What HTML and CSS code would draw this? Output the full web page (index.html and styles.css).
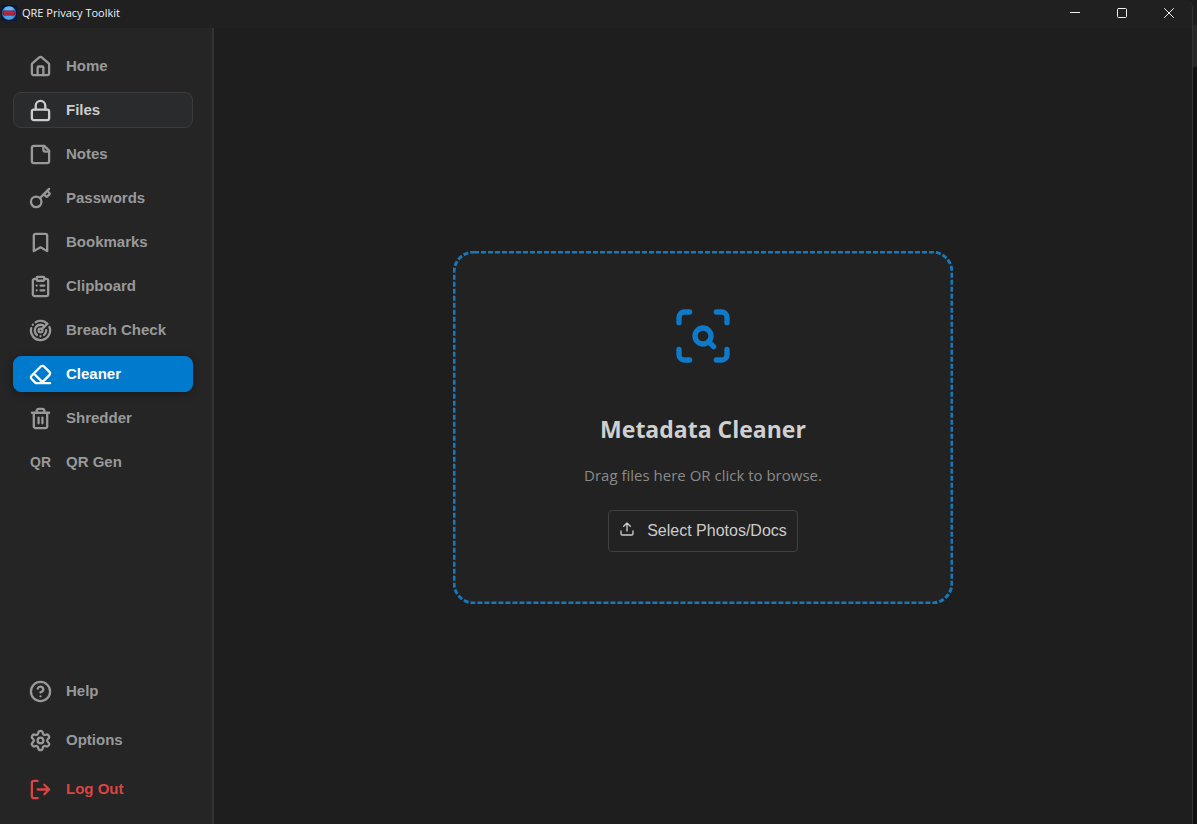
FILE: index.html
```html
<!DOCTYPE html>
<html lang="en">
<head>
<meta charset="utf-8">
<title>QRE Privacy Toolkit</title>
<link rel="stylesheet" href="styles.css">
</head>
<body>
<div class="window">
  <header class="titlebar">
    <svg class="app-icon" viewBox="0 0 16 16" aria-hidden="true">
      <rect width="16" height="16" rx="1" fill="#06183c"/>
      <circle cx="8" cy="8" r="7" fill="#2f86d6"/>
      <ellipse cx="8" cy="4" rx="4.500" ry="2.300" fill="#65b7ee"/>
      <ellipse cx="8" cy="12" rx="4.500" ry="2" fill="#4ba2e4"/>
      <rect x="1.500" y="5.500" width="13" height="5" rx="2" fill="#701c3c"/>
      <path d="M3 7.200h10M3 9h10" stroke="#d63145" stroke-width="1.200" stroke-dasharray="3 .6"/>
    </svg>
    <span class="app-name">QRE Privacy Toolkit</span>
    <div class="window-controls">
      <button type="button" aria-label="Minimize"><svg viewBox="0 0 10 10"><path d="M0 4.500h10"/></svg></button>
      <button type="button" aria-label="Maximize"><svg viewBox="0 0 10 10"><rect x=".5" y=".5" width="9" height="9" rx="1"/></svg></button>
      <button type="button" aria-label="Close"><svg viewBox="0 0 10 10"><path d="m.5.5 9 9m0-9-9 9"/></svg></button>
    </div>
  </header>

  <div class="shell">
    <nav class="sidebar">
      <div class="nav-group">
        <button type="button" class="nav-item"><svg class="icon" viewBox="0 0 24 24"><path d="M15 21v-8a1 1 0 0 0-1-1h-4a1 1 0 0 0-1 1v8"/><path d="M3 10a2 2 0 0 1 .709-1.528l7-5.999a2 2 0 0 1 2.582 0l7 5.999A2 2 0 0 1 21 10v9a2 2 0 0 1-2 2H5a2 2 0 0 1-2-2z"/></svg>Home</button>
        <button type="button" class="nav-item hovered"><svg class="icon" viewBox="0 0 24 24"><rect width="18" height="11" x="3" y="11" rx="2"/><path d="M7 11V7a5 5 0 0 1 10 0v4"/></svg>Files</button>
        <button type="button" class="nav-item"><svg class="icon" viewBox="0 0 24 24"><path d="M16 3H5a2 2 0 0 0-2 2v14a2 2 0 0 0 2 2h14a2 2 0 0 0 2-2V8Z"/><path d="M15 3v4a2 2 0 0 0 2 2h4"/></svg>Notes</button>
        <button type="button" class="nav-item"><svg class="icon" viewBox="0 0 24 24"><path d="m15.500 7.500 2.300 2.300a1 1 0 0 0 1.400 0l2.100-2.100a1 1 0 0 0 0-1.400L19 4"/><path d="m21 2-9.600 9.600"/><circle cx="7.500" cy="15.500" r="5.500"/></svg>Passwords</button>
        <button type="button" class="nav-item"><svg class="icon" viewBox="0 0 24 24"><path d="m19 21-7-4-7 4V5a2 2 0 0 1 2-2h10a2 2 0 0 1 2 2z"/></svg>Bookmarks</button>
        <button type="button" class="nav-item"><svg class="icon" viewBox="0 0 24 24"><rect width="8" height="4" x="8" y="2" rx="1"/><path d="M16 4h2a2 2 0 0 1 2 2v14a2 2 0 0 1-2 2H6a2 2 0 0 1-2-2V6a2 2 0 0 1 2-2h2M12 11h4M12 16h4M8 11h.01M8 16h.01"/></svg>Clipboard</button>
        <button type="button" class="nav-item"><svg class="icon" viewBox="0 0 24 24"><path d="M19.070 4.930A10 10 0 0 0 6.990 3.340M4 6h.01M2.290 9.620A10 10 0 1 0 21.310 8.350"/><path d="M16.240 7.760A6 6 0 1 0 8.230 16.670M12 18h.01M17.990 11.660A6 6 0 0 1 15.770 16.670"/><circle cx="12" cy="12" r="2"/><path d="m13.410 10.590 5.660-5.660"/></svg>Breach Check</button>
        <button type="button" class="nav-item active" aria-current="page"><svg class="icon" viewBox="0 0 24 24"><path d="m7 21-4.300-4.300c-1-1-1-2.500 0-3.400l9.600-9.600c1-1 2.500-1 3.400 0l5.600 5.600c1 1 1 2.500 0 3.400L13 21M22 21H7M5 11l9 9"/></svg>Cleaner</button>
        <button type="button" class="nav-item"><svg class="icon" viewBox="0 0 24 24"><path d="M3 6h18M19 6v14a2 2 0 0 1-2 2H7a2 2 0 0 1-2-2V6M8 6V4a2 2 0 0 1 2-2h4a2 2 0 0 1 2 2v2M10 11v6M14 11v6"/></svg>Shredder</button>
        <button type="button" class="nav-item"><span class="icon-text" aria-hidden="true">QR</span>QR Gen</button>
      </div>
      <div class="nav-group nav-footer">
        <button type="button" class="nav-item"><svg class="icon" viewBox="0 0 24 24"><circle cx="12" cy="12" r="10"/><path d="M9.090 9a3 3 0 0 1 5.830 1c0 2-3 3-3 3M12 17h.01"/></svg>Help</button>
        <button type="button" class="nav-item"><svg class="icon" viewBox="0 0 24 24"><path d="M9.671 4.136a2.340 2.340 0 0 1 4.659 0 2.340 2.340 0 0 0 3.319 1.915 2.340 2.340 0 0 1 2.330 4.033 2.340 2.340 0 0 0 0 3.831 2.340 2.340 0 0 1-2.330 4.033 2.340 2.340 0 0 0-3.319 1.915 2.340 2.340 0 0 1-4.659 0 2.340 2.340 0 0 0-3.320-1.915 2.340 2.340 0 0 1-2.330-4.033 2.340 2.340 0 0 0 0-3.831A2.340 2.340 0 0 1 6.350 6.051a2.340 2.340 0 0 0 3.319-1.915"/><circle cx="12" cy="12" r="3"/></svg>Options</button>
        <button type="button" class="nav-item danger"><svg class="icon" viewBox="0 0 24 24"><path d="m16 17 5-5-5-5M21 12H9M9 21H5a2 2 0 0 1-2-2V5a2 2 0 0 1 2-2h4"/></svg>Log Out</button>
      </div>
    </nav>

    <main class="content">
      <section class="dropzone">
        <svg class="dropzone-outline" aria-hidden="true"><rect x="1" y="1" rx="20"/></svg>
        <svg class="scan-icon" viewBox="0 0 24 24" aria-hidden="true"><path d="M3 7V5a2 2 0 0 1 2-2h2M17 3h2a2 2 0 0 1 2 2v2M21 17v2a2 2 0 0 1-2 2h-2M7 21H5a2 2 0 0 1-2-2v-2"/><circle cx="12" cy="12" r="3"/><path d="m16 16-1.900-1.900"/></svg>
        <h1>Metadata Cleaner</h1>
        <p>Drag files here OR click to browse.</p>
        <button type="button" class="select-button"><svg viewBox="0 0 24 24" aria-hidden="true"><path d="M12 3v12M17 8l-5-5-5 5M21 15v4a2 2 0 0 1-2 2H5a2 2 0 0 1-2-2v-4"/></svg>Select Photos/Docs</button>
      </section>
    </main>
  </div>
</div>
</body>
</html>
```
FILE: styles.css
```css
* { box-sizing: border-box; }

body {
  margin: 0;
  padding-right: 4px;
  background: linear-gradient(#1c1c1c 24px, #282828 26px, #282828 66px, #111 68px);
  font-family: "Open Sans", "Noto Sans", sans-serif;
}

button {
  margin: 0;
  border: 0;
  background: none;
  color: inherit;
  font: inherit;
}

svg {
  flex: none;
  fill: none;
  stroke: currentColor;
  stroke-linecap: round;
  stroke-linejoin: round;
}

.window {
  display: flex;
  flex-direction: column;
  min-height: 100vh;
  border-right: 1px solid #333;
  border-top-right-radius: 8px;
  background: #1e1e1e;
  overflow: hidden;
}

.titlebar {
  display: flex;
  align-items: center;
  height: 28px;
  padding: 0 0 2px 1px;
  background: #202020;
  color: #f0f0f0;
}

.app-icon {
  width: 16px;
  height: 16px;
  stroke: none;
}

.app-name {
  margin-left: 5px;
  font-size: 11px;
  line-height: 16px;
}

.window-controls {
  display: flex;
  margin-left: auto;
}

.window-controls button {
  display: grid;
  place-items: center;
  width: 47px;
  height: 26px;
  padding: 0;
}

.window-controls svg {
  width: 10px;
  height: 10px;
}

.shell {
  display: flex;
  flex: 1;
}

.sidebar {
  display: flex;
  flex-direction: column;
  justify-content: space-between;
  flex: none;
  width: 214px;
  padding: 20px 19px 17px 13px;
  border-right: 2px solid #333;
  background: #252526;
}

.nav-group {
  display: flex;
  flex-direction: column;
  gap: 8px;
}

.nav-footer { gap: 13px; }

.nav-item {
  display: flex;
  align-items: center;
  gap: 14px;
  height: 36px;
  padding: 0 15px;
  border: 1px solid transparent;
  border-radius: 8px;
  color: #999;
  font: bold 15px/20px "Liberation Sans", Arial, sans-serif;
  white-space: nowrap;
}

.nav-item.hovered {
  border-color: #3a3b3d;
  background: #2a2b2d;
  color: #ccc;
}

.nav-item.active {
  background: #007acc;
  border-color: #007acc;
  color: #fff;
  box-shadow: 0 2px 8px rgb(0 0 0 / 30%);
}

.nav-item.danger { color: #dc4444; }

.icon {
  width: 23px;
  height: 23px;
  stroke-width: 2.4;
}

.icon-text {
  width: 23px;
  font-size: 14px;
  text-align: center;
}

.content {
  display: grid;
  flex: 1;
  place-items: center;
  padding: 23px 20px 20px;
}

.dropzone {
  position: relative;
  display: flex;
  flex-direction: column;
  align-items: center;
  width: 100%;
  max-width: 500px;
  padding: 53px 40px 52px;
  border-radius: 21px;
  background: #222;
}

.dropzone-outline {
  position: absolute;
  inset: 0;
  width: 100%;
  height: 100%;
  color: #1878ba;
}

.dropzone-outline rect {
  width: calc(100% - 2px);
  height: calc(100% - 2px);
  stroke-width: 3;
  stroke-linecap: butt;
  stroke-dasharray: 5 2;
}

.scan-icon {
  width: 64px;
  height: 64px;
  color: #0f7ac8;
  stroke-width: 2;
}

.dropzone h1 {
  margin: 44px 0 0;
  color: #d0d0d0;
  font-size: 23px;
  line-height: 34px;
}

.dropzone p {
  margin: 17px 0 0;
  color: #8a8a8a;
  font-size: 15px;
  line-height: 24px;
}

.select-button {
  display: flex;
  align-items: center;
  gap: 12px;
  height: 42px;
  margin-top: 23px;
  padding: 0 10px;
  border: 1px solid #404040;
  border-radius: 4px;
  color: #ccc;
  font: 16px/20px "Liberation Sans", Arial, sans-serif;
}

.select-button svg {
  width: 16px;
  height: 16px;
  margin-bottom: 4px;
  stroke-width: 2;
}
```
